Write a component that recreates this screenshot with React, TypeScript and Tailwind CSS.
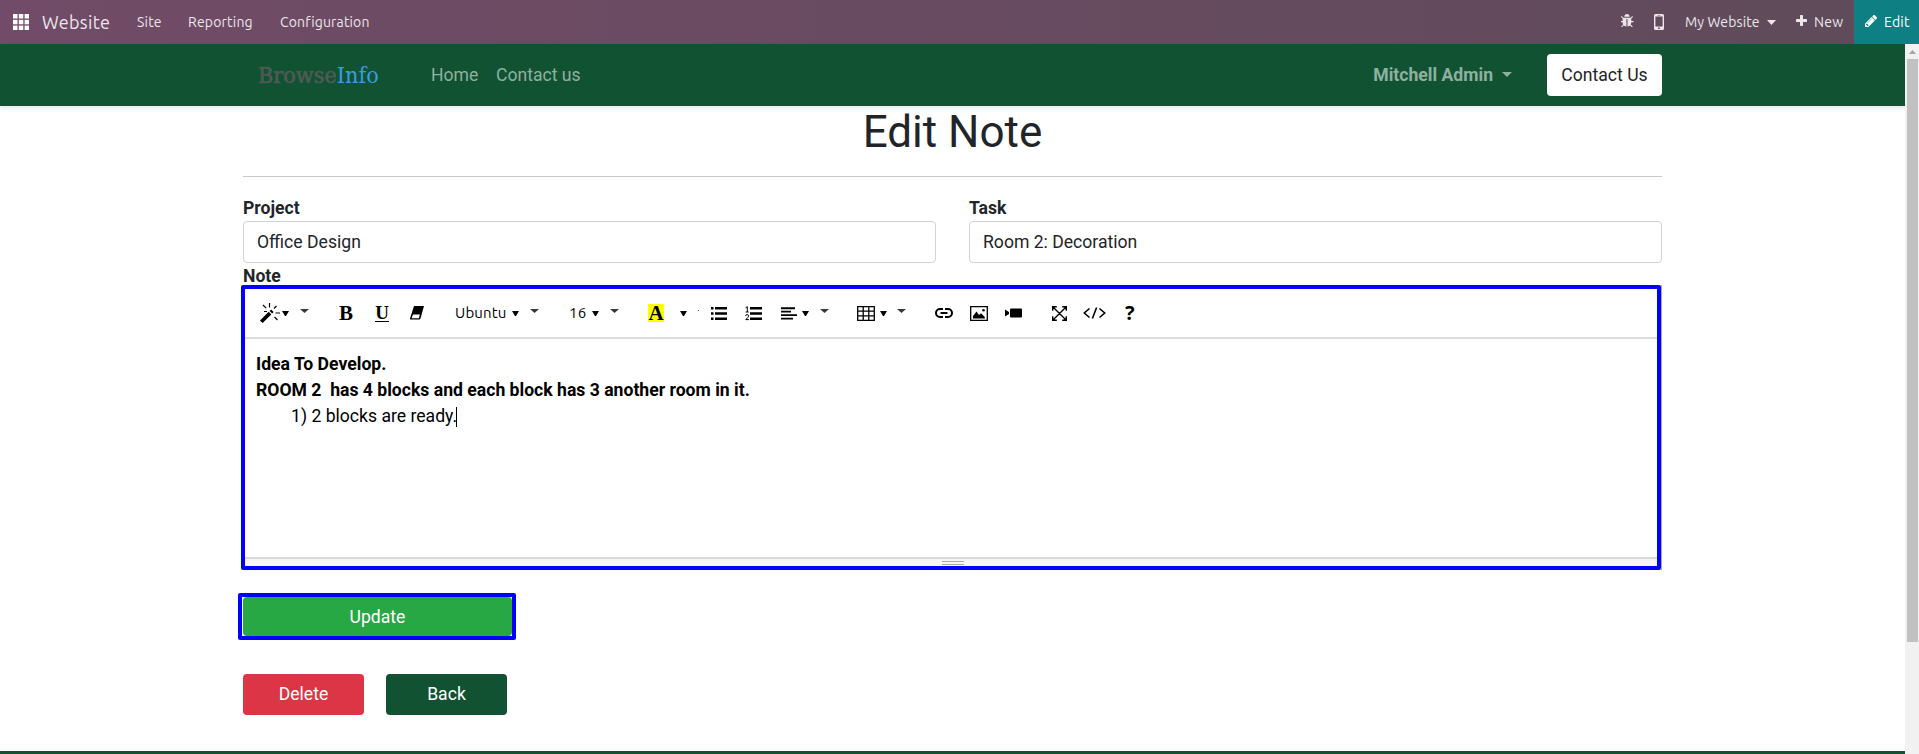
import type { ReactNode } from "react";

const ui = "font-['Ubuntu','Noto_Sans',sans-serif]";

function Down({ className = "" }: { className?: string }) {
  return (
    <svg className={`h-[5px] w-[7px] shrink-0 ${className}`} viewBox="0 0 7 5">
      <path d="M0 0h7L4 5H3z" />
    </svg>
  );
}

function Caret({ className = "" }: { className?: string }) {
  return (
    <svg className={`shrink-0 ${className}`} viewBox="0 0 10 5" preserveAspectRatio="none">
      <path d="M0 0h10L5 5z" fill="currentColor" />
    </svg>
  );
}

function MenuCaret({ className = "" }: { className?: string }) {
  return <Caret className={`mb-1 h-1 w-[9px] text-[#343a40] ${className}`} />;
}

function Icon({ className = "", box, children }: { className?: string; box: string; children: ReactNode }) {
  return (
    <svg className={`shrink-0 ${className}`} viewBox={box} fill="currentColor">
      {children}
    </svg>
  );
}

function TopBar() {
  return (
    <header className={`flex h-11 items-center bg-gradient-to-r from-[#714b67] to-[#5f4b5a] pl-[13px] text-[14px] text-[#ece6ea] ${ui}`}>
      <Icon box="0 0 16 16" className="size-4 text-white">
        {[0, 5.8, 11.6].map((y) => [0, 5.8, 11.6].map((x) => <rect key={`${x}-${y}`} x={x} y={y} width="4.5" height="4.5" />))}
      </Icon>
      <span className="ml-[13px] w-[95px] text-[18px] tracking-[0.33px] whitespace-nowrap">Website</span>
      <span className="w-[51px] tracking-[0.2px] whitespace-nowrap">Site</span>
      <span className="w-[92px] tracking-[0.2px] whitespace-nowrap">Reporting</span>
      <span className="tracking-[0.15px]">Configuration</span>
      <div className="ml-auto flex h-full items-center">
        <Icon box="160 64 1472 1536" className="mb-[3px] h-[13px] w-[13px]">
          <path d="M1632 960q0 26-19 45t-45 19h-224q0 171-67 290l208 209q19 19 19 45t-19 45q-18 19-45 19t-45-19l-198-197q-5 5-15 13t-42 28.5-65 36.5-82 29-97 13v-896h-128v896q-51 0-101.5-13.5t-87-33-66-39-43.5-32.5l-15-14-183 207q-20 21-48 21-24 0-43-16-19-18-20.5-44.5t15.5-46.5l202-227q-58-114-58-274h-224q-26 0-45-19t-19-45 19-45 45-19h224v-294l-173-173q-19-19-19-45t19-45 45-19 45 19l173 173h844l173-173q19-19 45-19t45 19 19 45-19 45l-173 173v294h224q26 0 45 19t19 45zm-480-576h-640q0-133 93.5-226.5t226.5-93.5 226.5 93.5 93.5 226.5z" />
        </Icon>
        <Icon box="0 0 10 16" className="ml-5 h-4 w-[10px]">
          <path fillRule="evenodd" d="M1.5 0h7A1.5 1.5 0 0 1 10 1.500v13A1.500 1.500 0 0 1 8.500 16h-7A1.500 1.500 0 0 1 0 14.500v-13A1.500 1.500 0 0 1 1.500 0zM1.400 2.600v9.800h7.200V2.600zM5 13.300a.9.9 0 1 0 0 1.800.9.9 0 0 0 0-1.800zM3.600 1v.6h2.800V1z" />
        </Icon>
        <span className="ml-[21px] w-[82px] tracking-[0.12px] whitespace-nowrap">My Website</span>
        <Caret className="h-[5px] w-[9px]" />
        <Icon box="192 128 1408 1408" className="mb-[3px] ml-5 size-[11px]">
          <path d="M1600 736v192q0 40-28 68t-68 28h-416v416q0 40-28 68t-68 28h-192q-40 0-68-28t-28-68v-416h-416q-40 0-68-28t-28-68v-192q0-40 28-68t68-28h416v-416q0-40 28-68t68-28h192q40 0 68 28t28 68v416h416q40 0 68 28t28 68z" />
        </Icon>
        <span className="ml-[7px] w-10 tracking-[0.3px]">New</span>
        <div className="flex h-full w-[65px] items-center bg-[#0e8084] pl-[11px] text-white">
          <Icon box="128 149 1515 1515" className="mb-[2px] size-3">
            <path d="M491 1536l91-91-235-235-91 91v107h128v128h107zm523-928q0-22-22-22-10 0-17 7l-542 542q-7 7-7 17 0 22 22 22 10 0 17-7l542-542q7-7 7-17zm-54-192l416 416-832 832h-416v-416zm683 96q0 53-37 90l-166 166-416-416 166-165q36-38 90-38 53 0 91 38l235 234q37 39 37 91z" />
          </Icon>
          <span className="ml-[7px] tracking-[0.2px]">Edit</span>
        </div>
      </div>
    </header>
  );
}

function SiteNav() {
  return (
    <nav className="flex h-[62px] shrink-0 items-center bg-[#115233] px-[243px] text-[#8fb09f] shadow-[0_2px_4px_rgba(0,0,0,0.1)]">
      <span className="ml-[15px] w-[157px] font-['DejaVu_Serif_Condensed','DejaVu_Serif',serif] text-[23.2px] leading-none font-stretch-condensed whitespace-nowrap text-[#585455] [text-shadow:0_0_1px_rgba(255,255,255,0.2)]">
        Browse<span className="text-[#3d9be0] [text-shadow:none]">Info</span>
      </span>
      <span className="ml-4 w-[65px]">Home</span>
      <span>Contact us</span>
      <span className="ml-auto font-bold">Mitchell Admin</span>
      <Caret className="mb-0.5 ml-[9px] h-[5px] w-[10px]" />
      <button className="ml-[35px] h-[42px] w-[115px] rounded-[4px] bg-white text-[#212529]">Contact Us</button>
    </nav>
  );
}

function Field({ label, value }: { label: string; value: string }) {
  return (
    <div className="flex-1">
      <div className="h-[27px] leading-[28px] font-bold">{label}</div>
      <div className="flex h-[42px] items-center rounded-[4px] border border-[#ced4da] px-[13px]">{value}</div>
    </div>
  );
}

function Toolbar() {
  return (
    <div className={`flex h-[50px] items-center border-b-2 border-[#dddddd] pl-[15px] text-[15px] text-black ${ui}`}>
      <Icon box="0 0 20 20" className="size-5">
        <path d="M0 17.500 8.700 8.800l2.600 2.600L2.600 20z" />
        <path d="m9.600 8 1.500-1.500L13.600 9l-1.500 1.500z" />
        <path d="M9.500 0v4.500M3 2l3.200 3.200M16.500 3 14 5.500M15.500 10H20M14.500 14l3 3M4 8.500h3" stroke="currentColor" strokeWidth="1.200" />
      </Icon>
      <Down className="ml-[2px]" />
      <MenuCaret className="ml-[11px]" />
      <span className="ml-[30px] w-[14px] font-['Liberation_Serif',serif] text-[21px] leading-none font-bold">B</span>
      <span className="ml-[22px] w-[14px] border-b border-black text-center font-['Liberation_Serif',serif] text-[19px] leading-[16px] font-bold">U</span>
      <Icon box="0 0 14 14" className="ml-[21px] size-[14px]">
        <path fillRule="evenodd" d="M4 0h10l-3.500 12.500-1 .9H.2L0 12.500zM3 8.500 1.600 12.300h7.200l1.100-3.800z" />
      </Icon>
      <span className="ml-[31px] w-[57px] tracking-[0.15px]">Ubuntu</span>
      <Down />
      <MenuCaret className="ml-[11px]" />
      <span className="ml-[30px] w-[23px] tracking-[0.2px]">16</span>
      <Down />
      <MenuCaret className="ml-[11px]" />
      <span className="ml-[29px] h-[18px] w-4 bg-[#ffff00] text-center font-['Liberation_Serif',serif] text-[21px] leading-[18px] font-bold">A</span>
      <Down className="ml-4" />
      <span className="mb-1.5 ml-[11px] size-px bg-[#555555]" />
      <Icon box="0 0 16 13" className="ml-3 h-[13px] w-4">
        <path d="M0 0h2.500v2.500H0zM0 5.200h2.500v2.500H0zM0 10.400h2.500v2.500H0zM4 0h12v2.500H4zM4 5.200h12v2.500H4zM4 10.400h12v2.500H4z" />
      </Icon>
      <Icon box="0 0 17 15" className="ml-[18px] h-[15px] w-[17px]">
        <path d="M5 1h12v2.500H5zM5 6.200h12v2.500H5zM5 11.400h12v2.500H5z" />
        <path d="M.5 1.800 2.300.7V6M.7 6h3M.6 10q.2-1.400 1.500-1.400 1.500 0 1.500 1.300 0 .8-1 1.800L.8 13.600h3.100" fill="none" stroke="currentColor" />
      </Icon>
      <Icon box="0 0 16 13" className="ml-[19px] h-[13px] w-4">
        <path d="M0 .3h14v1.900H0zM0 3.700h10v1.900H0zM0 7.200h16v1.900H0zM0 10.700h12v1.900H0z" />
      </Icon>
      <Down className="ml-[5px]" />
      <MenuCaret className="ml-[11px]" />
      <Icon box="0 0 18 15" className="ml-7 h-[15px] w-[18px]">
        <path d="M.7.700h16.600v13.600H.700zM6.200.700v13.600M11.800.700v13.600M.700 5.200h16.600M.700 9.800h16.600" fill="none" stroke="currentColor" strokeWidth="1.300" />
      </Icon>
      <Down className="ml-[5px]" />
      <MenuCaret className="ml-[10px]" />
      <Icon box="0 0 18 10" className="ml-[29px] h-[10px] w-[18px]">
        <path d="M8 1H5a4 4 0 0 0 0 8h3M10 1h3a4 4 0 0 1 0 8h-3M5.500 5h7" fill="none" stroke="currentColor" strokeWidth="2" />
      </Icon>
      <Icon box="0 0 18 15" className="ml-[17px] h-[15px] w-[18px]">
        <path d="M.7.700h16.600v13.600H.700z" fill="none" stroke="currentColor" strokeWidth="1.300" />
        <path d="M3 12.500V10l3.500-4.500L9 9l2-1.800 3.800 3.800v1.500z" />
        <circle cx="13.500" cy="4.300" r="1.300" />
      </Icon>
      <Icon box="0 0 17 10" className="ml-[17px] h-[10px] w-[17px]">
        <path d="M0 1.500 4 4v2L0 8.500zM5 1.500Q5 .500 6 .500h10q1 0 1 1v7q0 1-1 1H6q-1 0-1-1z" />
      </Icon>
      <Icon box="0 0 15 15" className="ml-[30px] size-[15px]">
        <path d="M.700 4.800V.700h4.100M10.200.700h4.100v4.100M14.300 10.200v4.100h-4.100M4.800 14.300H.700v-4.100M1 1l13 13M14 1 1 14" fill="none" stroke="currentColor" strokeWidth="1.400" />
      </Icon>
      <Icon box="0 0 23 12" className="ml-4 h-3 w-[23px]">
        <path d="M6.500 1.500 1.300 6l5.200 4.500M16.500 1.500 21.700 6l-5.200 4.500M13.600.500 9.400 11.500" fill="none" stroke="currentColor" strokeWidth="1.600" />
      </Icon>
      <span className="ml-[19px] font-['Noto_Sans',sans-serif] text-[20px] leading-none font-bold">?</span>
    </div>
  );
}

function Editor() {
  return (
    <div className="-ml-[2px] flex h-[285px] w-[1421px] border-r border-[#a9a9a9]">
      <div className="flex flex-1 flex-col rounded-[2px] border-4 border-[#0000ff]">
        <Toolbar />
        <div className="flex-1 pt-[11.5px] pl-[11px] leading-[26.4px] text-black">
          <p className="font-bold">Idea To Develop.</p>
          <p className="font-bold whitespace-pre">ROOM 2  has 4 blocks and each block has 3 another room in it.</p>
          <p className="flex items-center pl-[35px]">
            1) 2 blocks are ready.
            <span className="-ml-px h-[20px] w-px bg-black" />
          </p>
        </div>
        <div className="flex h-[9px] flex-col items-center gap-0.5 border-t-2 border-[#d9d9d9] bg-[#f5f5f5] pt-0.5 pl-1">
          <span className="h-px w-[22px] bg-[#a9a9a9]" />
          <span className="h-px w-[22px] bg-[#a9a9a9]" />
        </div>
      </div>
    </div>
  );
}

export default function App() {
  return (
    <div className="flex h-[754px] w-[1919px] flex-col overflow-hidden bg-white font-['Roboto',sans-serif] text-[17.6px] text-[#212529]">
      <TopBar />
      <div className="flex min-h-0 flex-1">
        <div className="flex w-[1905px] flex-col">
          <SiteNav />
          <main className="flex h-[645px] shrink-0 flex-col px-[243px]">
            <h1 className="h-[70px] text-center text-[44px] leading-[52px]">Edit Note</h1>
            <div className="h-px shrink-0 bg-[#c8c9ca]" />
            <div className="mt-[17px] flex gap-[33px]">
              <Field label="Project" value="Office Design" />
              <Field label="Task" value="Room 2: Decoration" />
            </div>
            <div className="h-[22px] leading-[26px] font-bold">Note</div>
            <Editor />
            <div className="mt-[23px] -ml-[5px] flex h-[47px] w-[278px] shrink-0 rounded-[2px] border-4 border-[#0000ff] pl-px">
              <button className="flex-1 rounded-[4px] bg-[#28a745] pt-0.5 text-white">Update</button>
            </div>
            <div className="mt-[34px] flex gap-[22px] text-white">
              <button className="h-[41px] w-[121px] rounded-[4px] bg-[#dc3545]">Delete</button>
              <button className="h-[41px] w-[121px] rounded-[4px] bg-[#115233]">Back</button>
            </div>
          </main>
          <footer className="h-[3px] shrink-0 bg-[#115233]" />
        </div>
        <div className="flex w-[14px] flex-col items-center bg-[#f1f1f1]">
          <svg className="mt-[6px] h-1 w-[7px] shrink-0" viewBox="0 0 7 4">
            <path d="M0 4h7L3.500 0z" fill="#a3a3a3" />
          </svg>
          <div className="mt-[5px] h-[583px] w-[11px] bg-[#c1c1c1]" />
        </div>
      </div>
    </div>
  );
}
